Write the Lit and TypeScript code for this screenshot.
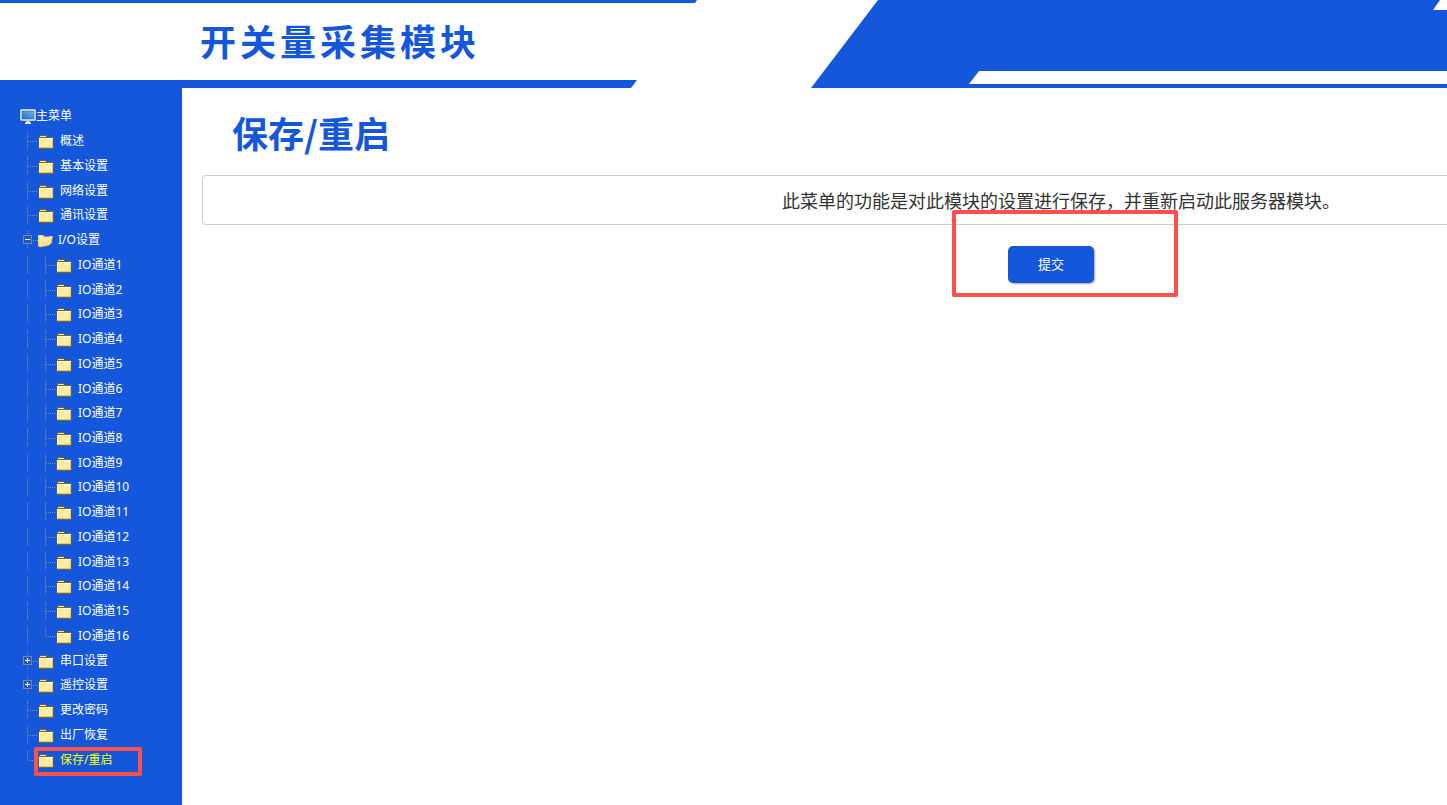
import { LitElement, html, css, svg, nothing } from "lit";
import { customElement, state } from "lit/decorators.js";
import { classMap } from "lit/directives/class-map.js";

interface MenuItem {
  label: string;
  depth: number;
  last?: boolean;
  toggle?: "plus" | "minus";
}

const channels: MenuItem[] = Array.from({ length: 16 }, (_, i) => ({
  label: `IO通道${i + 1}`,
  depth: 2,
  last: i === 15,
}));

const items: MenuItem[] = [
  { label: "概述", depth: 1 },
  { label: "基本设置", depth: 1 },
  { label: "网络设置", depth: 1 },
  { label: "通讯设置", depth: 1 },
  { label: "I/O设置", depth: 1, toggle: "minus" },
  ...channels,
  { label: "串口设置", depth: 1, toggle: "plus" },
  { label: "遥控设置", depth: 1, toggle: "plus" },
  { label: "更改密码", depth: 1 },
  { label: "出厂恢复", depth: 1 },
  { label: "保存/重启", depth: 1, last: true },
];

// \uff0c is the full-width Chinese comma
const description = "此菜单的功能是对此模块的设置进行保存\uff0c并重新启动此服务器模块。";

const dots = (d: string) =>
  svg`<path d=${d} fill="none" stroke="#8d8d94" stroke-dasharray="1 1" shape-rendering="crispEdges"/>`;

const line = (kind: "through" | "tee" | "corner") => html`<svg class="branch" viewBox="0 0 18 18" aria-hidden="true">
  ${dots(kind === "corner" ? "M7.5 0V9" : "M7.5 0V18")}
  ${kind === "through" ? nothing : dots("M8 9.5H18")}
</svg>`;

const expander = (kind: "plus" | "minus") => html`<svg class="branch" viewBox="0 0 18 18" aria-hidden="true">
  ${dots("M7.5 0V4M7.5 14V18")}
  ${dots("M13 9.5H18")}
  <g fill="none" shape-rendering="crispEdges">
    <rect x="3.5" y="4.5" width="8" height="8" stroke="#868686" />
    <path d=${kind === "plus" ? "M5 8.5H10M7.5 6V11" : "M5 8.5H10"} stroke="#fff" />
  </g>
</svg>`;

const folder = html`<svg class="icon" viewBox="0 0 16 18" aria-hidden="true">
  <path d="M1 5L2 3H8L9 5H15.500V17H.500V5Z" fill="#6d6544" />
  <path d="M2 4H8V5H2Z" fill="#ffe48c" />
  <path d="M1 6H15V16H1Z" fill="#ffe893" />
  <path d="M1 6H15V7H1Z" fill="#fff6cc" />
  <path d="M1 7H2V15H1Z" fill="#fff3c0" />
  <path d="M14 7H15V15H14ZM1 15H15V16H1Z" fill="#e6c566" />
  <path d="M3 12L9 7H14V11L9 15H3Z" fill="#ffeeaa" />
</svg>`;

const openFolder = html`<svg class="icon" viewBox="0 0 16 18" aria-hidden="true">
  <path d="M0 4H5L6.500 5.500H11V8L3 15.500L1 16L0 14Z" fill="#f5d778" />
  <path d="M1 5H4.500L6 6.500H10V8L2 14Z" fill="#ffeeb0" />
  <path d="M4 8.500L9 8L11 5.500L14.500 5L13.500 12L10.500 14.500L1.500 16Z" fill="#fbe28b" />
  <path d="M4.500 9.500L9.500 9L11.500 6.500L14 6" fill="none" stroke="#fffbe0" />
  <path d="M14.500 5L13.500 12L10.500 14.500L1.500 16" fill="none" stroke="#d8ac4b" stroke-width=".8" />
</svg>`;

const computer = html`<svg class="icon" viewBox="0 0 16 18" aria-hidden="true">
  <defs>
    <linearGradient id="screen" x1="0" y1="1" x2="1" y2="0">
      <stop offset="0" stop-color="#1b70bd" />
      <stop offset="1" stop-color="#66b9ed" />
    </linearGradient>
  </defs>
  <rect x=".5" y="2.500" width="15" height="11" rx="1" fill="#f4f2ec" stroke="#c8c8c4" />
  <rect x="2" y="4" width="12" height="8" fill="url(#screen)" stroke="#32699d" stroke-width=".6" />
  <path d="M6 14H10V16H6Z" fill="#cfcfca" />
  <path d="M5 15.500H11V17H5Z" fill="#eeeeea" />
</svg>`;

@customElement("app-root")
export class AppRoot extends LitElement {
  @state() private current = "保存/重启";

  static styles = css`
    :host {
      --blue: #1557db;
      --mark: #ff5050;
      display: flex;
      flex-direction: column;
      min-height: 100vh;
      overflow: hidden;
      background: #fff;
      font-family: "Noto Sans", "Noto Sans CJK SC", sans-serif;
    }
    * {
      box-sizing: border-box;
    }
    .banner {
      display: grid;
      grid-template-columns: minmax(0, 1fr);
      align-items: center;
      height: 88px;
      overflow: hidden;
    }
    .banner > * {
      grid-area: 1 / 1;
    }
    .art {
      display: block;
      width: 1920px;
      height: 88px;
    }
    .brand {
      margin: 0;
      padding: 0 0 8px 200px;
      color: var(--blue);
      font: 700 36px/48px "Noto Sans CJK SC", sans-serif;
      letter-spacing: 4px;
    }
    .body {
      display: flex;
      flex: 1;
    }
    .side {
      display: flex;
      flex: none;
      width: 182px;
      padding: 16px 0 33px 20px;
      background: var(--blue);
    }
    .tree {
      display: grid;
      flex: 1;
      grid-auto-rows: minmax(24px, 1fr);
      margin: 0;
      padding: 0;
      list-style: none;
      font-size: 12px;
      line-height: 18px;
      color: #fff;
    }
    .row {
      position: relative;
      display: flex;
      align-items: center;
    }
    .branch,
    .icon {
      display: block;
      flex: none;
      width: 18px;
      height: 18px;
    }
    .icon {
      width: 16px;
    }
    .toggle {
      flex: none;
      padding: 0;
      border: 0;
      background: none;
      cursor: pointer;
    }
    .link {
      display: flex;
      align-items: center;
      gap: 6px;
      color: inherit;
      text-decoration: none;
      white-space: nowrap;
    }
    .link.root {
      gap: 0;
    }
    .link.open {
      gap: 4px;
    }
    .link.active {
      color: #ff0;
    }
    .mark {
      position: absolute;
      border: 4px solid var(--mark);
      border-radius: 2px;
      pointer-events: none;
    }
    .row .mark {
      inset: 0 40px -4px 14px;
    }
    .content {
      flex: 1 0 1738px;
      padding: 20px 0 0 20px;
    }
    .title {
      margin: 0 0 19px 30px;
      color: var(--blue);
      font: 700 36px/48px "Noto Sans CJK SC", sans-serif;
    }
    .note {
      margin: 0;
      padding: 11px 0;
      border: 1px solid #ccc;
      border-radius: 4px;
      color: #333;
      font: 18px/26px "Noto Sans CJK SC", sans-serif;
      text-align: center;
    }
    .actions {
      display: flex;
      justify-content: center;
      margin-left: -20px;
      padding-top: 21px;
    }
    .submit-wrap {
      position: relative;
    }
    .submit-wrap .mark {
      inset: -36px -84px -14px -56px;
    }
    .submit {
      display: block;
      padding: 8px 30px 9px;
      border: 0;
      border-radius: 5px;
      background: var(--blue);
      box-shadow: 1px 1px 2px rgba(0, 0, 0, 0.35);
      color: #fff;
      font: 13px/20px "Noto Sans CJK SC", sans-serif;
      cursor: pointer;
    }
  `;

  private renderItem(item: MenuItem) {
    const active = item.label === this.current;
    return html`<li class="row">
      ${item.depth === 2 ? line("through") : nothing}
      ${item.toggle
        ? html`<button class="toggle" type="button" aria-label=${item.label} aria-expanded=${item.toggle === "minus"}>
            ${expander(item.toggle)}
          </button>`
        : line(item.last ? "corner" : "tee")}
      <a
        class=${classMap({ link: true, active, open: item.toggle === "minus" })}
        href="#"
        @click=${(e: Event) => {
          e.preventDefault();
          this.current = item.label;
        }}
        >${item.toggle === "minus" ? openFolder : folder}<span>${item.label}</span></a
      >
      ${item.label === "保存/重启" ? html`<span class="mark"></span>` : nothing}
    </li>`;
  }

  render() {
    return html`
      <header class="banner">
        <svg class="art" viewBox="0 0 1920 88" aria-hidden="true">
          <g fill="#1557db">
            <path d="M0 0H697L695 3H0Z" />
            <path d="M0 80H637L631 88H0Z" />
            <path d="M878 0H1920V88H811Z" />
          </g>
          <path d="M979 71H1920V84H969Z" fill="#fff" />
          <path d="M1440 0H1920V10H1433Z" fill="#fff" />
        </svg>
        <h1 class="brand">开关量采集模块</h1>
      </header>
      <div class="body">
        <nav class="side">
          <ul class="tree">
            <li class="row"><a class="link root" href="#">${computer}<span>主菜单</span></a></li>
            ${items.map((item) => this.renderItem(item))}
          </ul>
        </nav>
        <main class="content">
          <h2 class="title">保存/重启</h2>
          <p class="note">${description}</p>
          <div class="actions">
            <div class="submit-wrap">
              <button class="submit" type="button">提交</button>
              <span class="mark"></span>
            </div>
          </div>
        </main>
      </div>
    `;
  }
}
